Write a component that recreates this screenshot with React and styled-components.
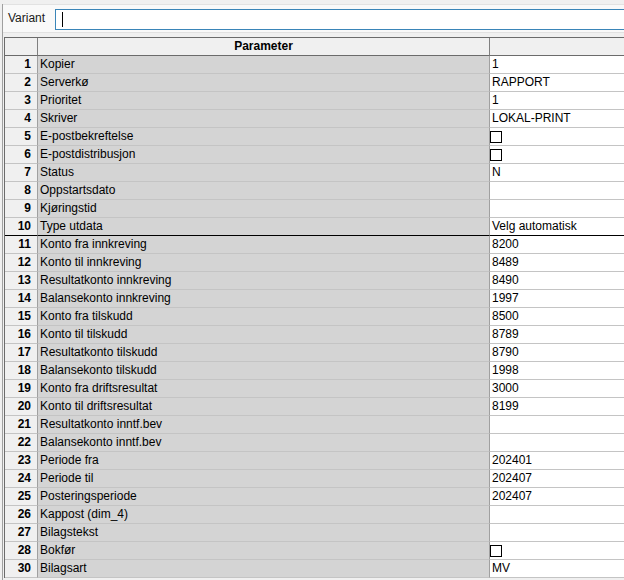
import styled, { createGlobalStyle } from 'styled-components'

const GlobalStyle = createGlobalStyle`
  html, body {
    margin: 0;
    padding: 0;
    background: #f0f0f0;
    overflow: hidden;
  }
  body {
    font-family: "Liberation Sans", Arial, sans-serif;
    font-size: 12px;
    color: #000;
  }
`

const rows = [
  [1, 'Kopier', '1'],
  [2, 'Serverkø', 'RAPPORT'],
  [3, 'Prioritet', '1'],
  [4, 'Skriver', 'LOKAL-PRINT'],
  [5, 'E-postbekreftelse', 'check'],
  [6, 'E-postdistribusjon', 'check'],
  [7, 'Status', 'N'],
  [8, 'Oppstartsdato', ''],
  [9, 'Kjøringstid', ''],
  [10, 'Type utdata', 'Velg automatisk'],
  [11, 'Konto fra innkreving', '8200'],
  [12, 'Konto til innkreving', '8489'],
  [13, 'Resultatkonto innkreving', '8490'],
  [14, 'Balansekonto innkreving', '1997'],
  [15, 'Konto fra tilskudd', '8500'],
  [16, 'Konto til tilskudd', '8789'],
  [17, 'Resultatkonto tilskudd', '8790'],
  [18, 'Balansekonto tilskudd', '1998'],
  [19, 'Konto fra driftsresultat', '3000'],
  [20, 'Konto til driftsresultat', '8199'],
  [21, 'Resultatkonto inntf.bev', ''],
  [22, 'Balansekonto inntf.bev', ''],
  [23, 'Periode fra', '202401'],
  [24, 'Periode til', '202407'],
  [25, 'Posteringsperiode', '202407'],
  [26, 'Kappost (dim_4)', ''],
  [27, 'Bilagstekst', ''],
  [28, 'Bokfør', 'check'],
  [30, 'Bilagsart', 'MV'],
]

const Frame = styled.div`
  margin-left: 2px;
  border-left: 1px solid #a0a0a0;
  height: 580px;
  box-sizing: border-box;
`

const VariantBar = styled.div`
  margin-top: 4px;
  height: 27px;
  border-top: 1px solid #e2e2e2;
  border-bottom: 1px solid #e2e2e2;
  background: #f9f9f9;
  display: flex;
  align-items: flex-start;
  padding-left: 5px;
`

const Label = styled.span`
  width: 47px;
  line-height: 27px;
  font-size: 12px;
  color: #1a1a1a;
`

const FakeInput = styled.div`
  flex: 1;
  margin-top: 4px;
  height: 19px;
  border: 1px solid #3a85b8;
  border-right: none;
  background: #fff;
  display: flex;
  align-items: center;
  padding-left: 6px;
`

const Caret = styled.span`
  width: 1px;
  height: 15px;
  background: #000;
`

const Grid = styled.div`
  margin-top: 4px;
  margin-left: 1px;
  border-top: 1px solid #6b6b6b;
  border-left: 1px solid #6b6b6b;
  display: grid;
  grid-template-columns: 33px 452px 1fr;
`

const HeadCell = styled.div`
  height: 17px;
  background: #f0f0f0;
  border-bottom: 1px solid #6b6b6b;
  border-right: ${p => (p.$last ? 'none' : '1px solid #808080')};
  font-weight: bold;
  text-align: center;
  line-height: 17px;
`

const NumCell = styled.div`
  height: 17px;
  background: #f0f0f0;
  border-bottom: 1px solid ${p => (p.$strong ? '#000' : '#c4c4c4')};
  border-right: 1px solid #a0a0a0;
  font-weight: bold;
  text-align: right;
  padding-right: 6px;
  line-height: 17px;
`

const ParamCell = styled.div`
  height: 17px;
  background: #d4d4d4;
  border-bottom: 1px solid ${p => (p.$strong ? '#000' : '#c4c4c4')};
  border-right: 1px solid #a0a0a0;
  padding-left: 2px;
  line-height: 17px;
  white-space: nowrap;
`

const ValueCell = styled.div`
  height: 17px;
  background: #fff;
  border-bottom: 1px solid ${p => (p.$strong ? '#000' : '#c4c4c4')};
  padding-left: 2px;
  line-height: 17px;
  white-space: nowrap;
  display: flex;
  align-items: center;
`

const Check = styled.span`
  width: 10px;
  height: 10px;
  border: 1px solid #000;
  background: #fff;
  margin-left: -2px;
`

export default function App() {
  return (
    <>
      <GlobalStyle />
      <Frame>
        <VariantBar>
          <Label>Variant</Label>
          <FakeInput>
            <Caret />
          </FakeInput>
        </VariantBar>
        <Grid>
          <HeadCell />
          <HeadCell>Parameter</HeadCell>
          <HeadCell $last />
          {rows.map(([n, name, value]) => {
            const strong = n === 10
            return [
              <NumCell key={`n${n}`} $strong={strong}>{n}</NumCell>,
              <ParamCell key={`p${n}`} $strong={strong}>{name}</ParamCell>,
              <ValueCell key={`v${n}`} $strong={strong}>
                {value === 'check' ? <Check /> : value}
              </ValueCell>,
            ]
          })}
        </Grid>
      </Frame>
    </>
  )
}
